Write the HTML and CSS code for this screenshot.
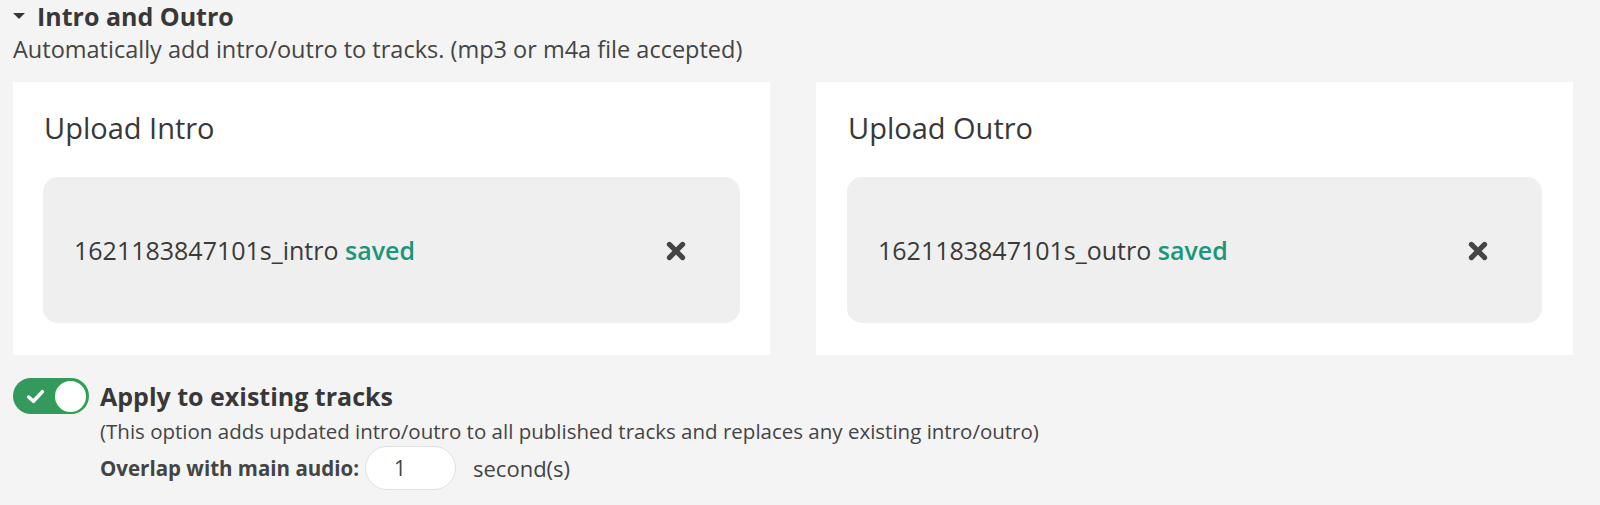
FILE: index.html
```html
<!DOCTYPE html>
<html lang="en">
<head>
    <meta charset="UTF-8">
    <meta name="viewport" content="width=device-width, initial-scale=1.0">
    <title>Intro and Outro</title>
    <link rel="stylesheet" href="styles.css">
</head>
<body>

    <div class="section">
        <h2 class="section-title"><span class="caret"></span>Intro and Outro</h2>
        <p class="section-desc">Automatically add intro/outro to tracks. (mp3 or m4a file accepted)</p>

        <div class="uploads">
            <div class="card">
                <h3>Upload Intro</h3>
                <div class="file-box">
                    <span class="file-name">1621183847101s_intro <span class="saved">saved</span></span>
                    <button type="button" class="remove" aria-label="Remove intro">
                        <svg width="22" height="22" viewBox="0 0 20 20"><path d="M4 4 L16 16 M16 4 L4 16" stroke="#444" stroke-width="4.6" stroke-linecap="round"/></svg>
                    </button>
                </div>
            </div>
            <div class="card">
                <h3>Upload Outro</h3>
                <div class="file-box">
                    <span class="file-name">1621183847101s_outro <span class="saved">saved</span></span>
                    <button type="button" class="remove" aria-label="Remove outro">
                        <svg width="22" height="22" viewBox="0 0 20 20"><path d="M4 4 L16 16 M16 4 L4 16" stroke="#444" stroke-width="4.6" stroke-linecap="round"/></svg>
                    </button>
                </div>
            </div>
        </div>

        <div class="apply">
            <label class="toggle">
                <input type="checkbox" checked>
                <span class="track">
                    <svg class="check" width="19" height="15" viewBox="0 0 18 14"><path d="M2.5 7.5 L7 11.5 L15.5 2.5" fill="none" stroke="#fff" stroke-width="3.4" stroke-linecap="round" stroke-linejoin="round"/></svg>
                    <span class="knob"></span>
                </span>
            </label>
            <div class="apply-body">
                <div class="apply-title">Apply to existing tracks</div>
                <p class="apply-note">(This option adds updated intro/outro to all published tracks and replaces any existing intro/outro)</p>
                <div class="overlap">
                    <label for="overlap">Overlap with main audio:</label>
                    <input type="text" id="overlap" value="1">
                    <span class="unit">second(s)</span>
                </div>
            </div>
        </div>
    </div>

</body>
</html>
```

FILE: styles.css
```css
body { margin: 0; padding: 0 27px 0 13px; background: #f4f4f4; color: #444; font-family: "Open Sans", "Noto Sans", sans-serif; }
.section-title { display: flex; align-items: center; gap: 12px; margin: 0; font-size: 25px; line-height: 32px; font-weight: 700; color: #383838; }
.caret { width: 0; height: 0; border-left: 6px solid transparent; border-right: 6px solid transparent; border-top: 6px solid #383838; }
.section-desc { margin: 2px 0 0; font-size: 23.5px; line-height: 30px; color: #444; }

.uploads { display: grid; grid-template-columns: 1fr 1fr; gap: 46px; margin-top: 18px; }
.card { background: white; padding: 28px 30px 32px 30px; }
.card:last-child { padding-left: 31px; padding-right: 31px; }
.card h3 { margin: 0 0 31px 1px; font-size: 29px; line-height: 36px; font-weight: 400; color: #383838; }
.file-box { display: flex; align-items: center; justify-content: space-between; height: 146px; padding: 0 53px 0 31px; background: #efefef; border-radius: 15px; box-sizing: border-box; }
.file-name { font-size: 25px; color: #3a3a3a; }
.saved { color: #1b957b; font-weight: 600; }
.remove { display: flex; padding: 0; border: none; background: none; cursor: pointer; margin-top: 2px; }

.apply { display: flex; align-items: flex-start; gap: 11px; margin-top: 23px; }
.toggle { position: relative; display: block; cursor: pointer; }
.toggle input { display: none; }
.track { display: flex; align-items: center; justify-content: space-between; width: 76px; height: 36px; padding: 0 0 0 13px; border-radius: 18px; background: #34995c; box-sizing: border-box; }
.knob { width: 31px; height: 31px; margin-right: 1px; border-radius: 50%; background: #fff; border: 2px solid #2fa24f; box-sizing: content-box; }
.apply-title { font-size: 25px; line-height: 36px; font-weight: 700; color: #383838; }
.apply-note { margin: 3px 0 0; font-size: 20.5px; line-height: 28px; color: #444; }
.overlap { display: flex; align-items: center; margin-top: 1px; font-size: 20.5px; color: #444; }
.overlap label { font-weight: 700; margin-right: 6px; }
.overlap input { width: 91px; height: 44px; padding: 0 0 0 28px; margin-right: 17px; border: 1px solid #e0e0e0; border-radius: 22px; background: white; font-family: inherit; font-size: 21px; color: #444; box-sizing: border-box; outline: none; }
.unit { font-size: 22px; }
```
